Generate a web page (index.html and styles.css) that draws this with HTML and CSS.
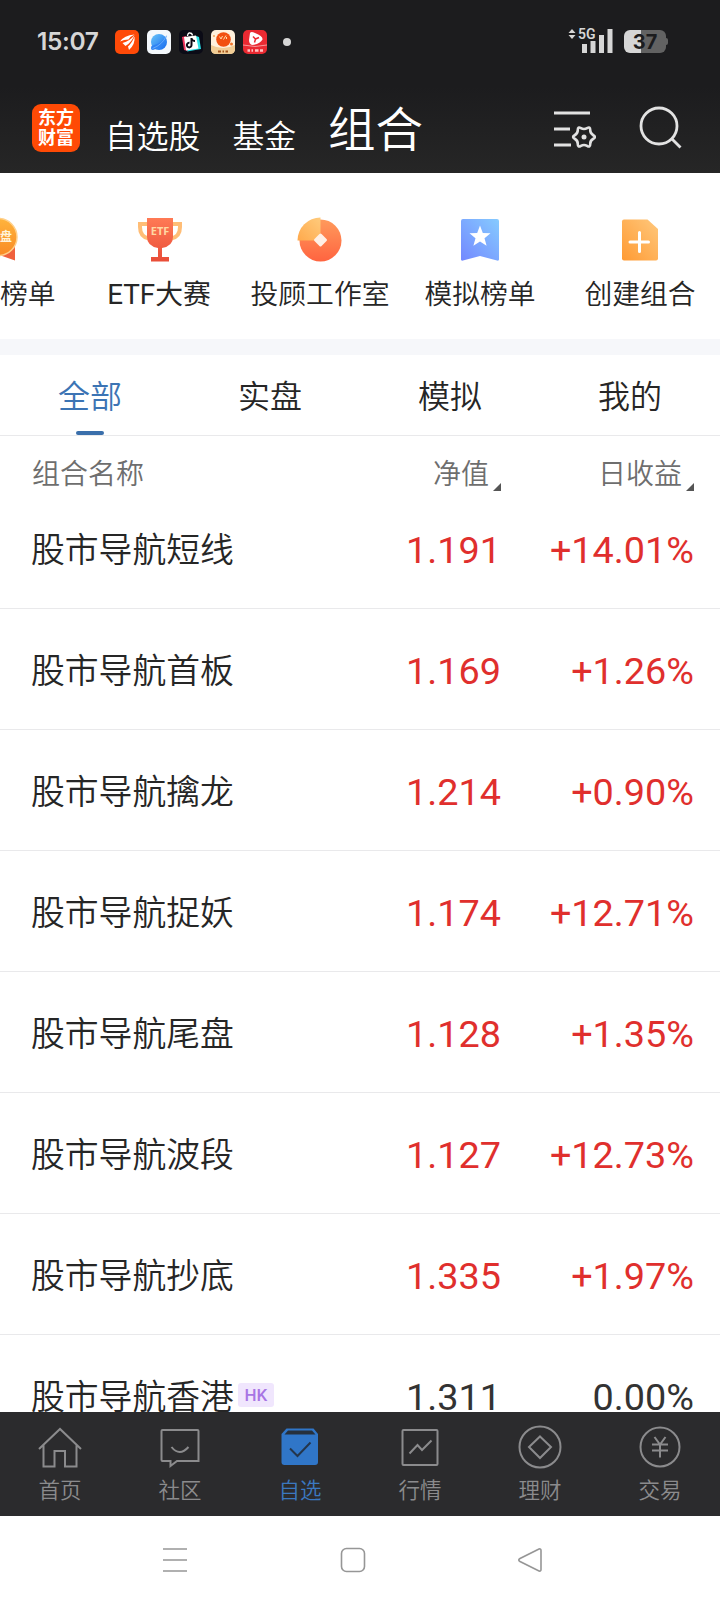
FILE: index.html
```html
<!DOCTYPE html>
<html lang="zh-CN">
<head>
    <meta charset="UTF-8">
    <meta name="viewport" content="width=device-width, initial-scale=1.0">
    <title>组合</title>
    <link rel="stylesheet" href="styles.css">
</head>
<body>
    <header class="top">
        <div class="status-bar">
            <span class="clock">15:07</span>
            <div class="apps">
                <svg width="24" height="24" viewBox="0 0 24 24">
                    <rect width="24" height="24" rx="5" fill="#ff4a08"/>
                    <path d="M5 11.500Q9 5.500 19.500 4.500Q16 6 13.500 9.500Q9 9.500 5 11.500ZM7.500 13Q15 11 19.500 5Q17 12 10.500 16ZM13 16.500Q17 13 19.500 6.500Q20.500 14 14 20Z" fill="#fff"/>
                </svg>
                <svg width="24" height="24" viewBox="0 0 24 24">
                    <defs>
                        <linearGradient id="globe" x1="0" y1="0" x2="1" y2="1">
                            <stop offset="0" stop-color="#69c5f8"/>
                            <stop offset="1" stop-color="#1468ef"/>
                        </linearGradient>
                    </defs>
                    <rect width="24" height="24" rx="5" fill="#f4f8fc"/>
                    <circle cx="12" cy="12" r="8" fill="url(#globe)"/>
                    <path d="M4.500 16Q3 20 6 20Q18 17 20 5Q16 13 4.500 16Z" fill="#2f83f4"/>
                    <path d="M5.500 18.500Q15 15 19.500 6" fill="none" stroke="#8cc8ff" stroke-width=".6"/>
                </svg>
                <svg width="24" height="24" viewBox="0 0 24 24">
                    <rect width="24" height="24" rx="5" fill="#0b0b16"/>
                    <path d="M3 7L5 20L9 21L7 6Z" fill="#f0325d"/>
                    <path d="M17 6L20 7L22 19L8 21.500Z" fill="#28dfe5"/>
                    <path d="M5 7L17 5.500L19.500 18.500L7 20.500Z" fill="#fff"/>
                    <path d="M8.500 6Q9 2.500 11 3Q13 3 13.500 5.500" fill="none" stroke="#fff" stroke-width="1.300"/>
                    <path d="M12.500 8V15.200A2.300 2.300 0 1 1 10.500 12.800M12.500 8.500Q13.500 11 16 11" fill="none" stroke="#0b0b16" stroke-width="2"/>
                </svg>
                <svg width="24" height="24" viewBox="0 0 24 24">
                    <rect width="24" height="24" rx="5" fill="#fff1dc"/>
                    <path d="M0 15Q12 21 24 15V19Q24 24 19 24H5Q0 24 0 19Z" fill="#f1cd95"/>
                    <circle cx="12.500" cy="9.500" r="7.300" fill="#f2500f"/>
                    <path d="M8.500 6.500L10 9L11.500 6M12.500 9.500L15 5.500M15.500 9V7" fill="none" stroke="#ffd9a8" stroke-width="1"/>
                    <circle cx="20.500" cy="14" r="1.500" fill="#f2762a"/>
                    <circle cx="3" cy="6" r="1" fill="#f2a65a"/>
                    <path d="M7 21.500H10M11.500 21.500H13M14.500 21.500H17" stroke="#a3541c" stroke-width="1.800"/>
                </svg>
                <svg width="24" height="24" viewBox="0 0 24 24">
                    <rect width="24" height="24" rx="5" fill="#ea2a32"/>
                    <path d="M0 15Q12 18 24 15" fill="none" stroke="#f7b5b5" stroke-width=".8"/>
                    <path d="M7 3Q8 1 12 3Q20 6 19.500 9.500Q17 14 9 15Q6 14 6 10Z" fill="#fff"/>
                    <path d="M10 6.500L12.500 9L16 7.500M12.500 9L11.500 12.500" fill="none" stroke="#ea2a32" stroke-width="1.500"/>
                    <path d="M4.500 20.500H7M8.500 20.500H10M12 20.500H15.500M17 20.500H20" stroke="#ffc5c5" stroke-width="2.400"/>
                </svg>
            </div>
            <span class="more-dot"></span>
            <svg class="signal" width="46" height="26" viewBox="0 0 46 26">
                <path d="M0.500 5L4 1L7.500 5ZM0.500 7H7.500L4 11Z" fill="#d6d6d6"/>
                <text x="10" y="11" class="net">5G</text>
                <path d="M14 16H19V25H14ZM22.500 13H27.500V25H22.500ZM31 7H36V25H31ZM39.500 1H44.500V25H39.500Z" fill="#d6d6d6"/>
            </svg>
            <div class="battery"><span>37</span></div>
        </div>
        <nav class="title-bar">
            <div class="logo">东方<br>财富</div>
            <a class="title">自选股</a>
            <a class="title">基金</a>
            <a class="title current">组合</a>
            <svg class="icon-manage" width="42" height="40" viewBox="0 0 42 40" fill="none" stroke="#e2e2e2">
                <path d="M0 4H36M0 20H16M0 36H17" stroke-width="3"/>
                <path transform="translate(30 28)" d="M9.300 1.750Q6.100 3.500 6.200 7.150Q6.250 10.800 3.100 8.900Q0 7 -3.100 8.900Q-6.250 10.800 -6.200 7.150Q-6.100 3.500 -9.300 1.750Q-12.500 0 -9.300 -1.750Q-6.100 -3.500 -6.200 -7.150Q-6.250 -10.800 -3.100 -8.900Q0 -7 3.100 -8.900Q6.250 -10.800 6.200 -7.150Q6.100 -3.500 9.300 -1.750Q12.500 0 9.300 1.750Z" stroke-width="2.600"/>
                <circle cx="30" cy="28" r="2.500" fill="#e2e2e2" stroke="none"/>
            </svg>
            <svg class="icon-search" width="44" height="44" viewBox="0 0 44 44" fill="none" stroke="#e2e2e2" stroke-width="2.800">
                <circle cx="20" cy="20" r="18"/>
                <path d="M32.500 32.500L41.500 41.500"/>
            </svg>
        </nav>
    </header>

    <section class="shortcuts">
        <div class="shortcut">
            <svg width="46" height="46" viewBox="0 0 46 46">
                <defs>
                    <linearGradient id="medal" x1="0" y1="0" x2="0" y2="1">
                        <stop offset="0" stop-color="#ffb43c"/>
                        <stop offset="1" stop-color="#f98a25"/>
                    </linearGradient>
                </defs>
                <path d="M6 30L5 43.500L22 38L38 43.500V28Z" fill="#f0613d"/>
                <circle cx="21.500" cy="20" r="18.500" fill="url(#medal)" stroke="#ffd08a" stroke-width="1.500"/>
                <text x="11" y="24" class="medal-text">实盘</text>
            </svg>
            <span>实盘榜单</span>
        </div>
        <div class="shortcut">
            <svg width="46" height="46" viewBox="0 0 46 46">
                <defs>
                    <linearGradient id="cup" x1="0" y1="0" x2="0" y2="1">
                        <stop offset="0" stop-color="#ff7a55"/>
                        <stop offset="1" stop-color="#e94d38"/>
                    </linearGradient>
                </defs>
                <path d="M11 7H3V10Q3 20 12 21.500M35 7H43V10Q43 20 34 21.500" fill="none" stroke="#ffbd76" stroke-width="4"/>
                <path d="M10 1H36V20Q36 29 25 31V40H32V44.500H14V40H21V31Q10 29 10 20Z" fill="url(#cup)"/>
                <text x="23" y="17.500" text-anchor="middle" class="etf-text">ETF</text>
            </svg>
            <span class="latin">ETF大赛</span>
        </div>
        <div class="shortcut">
            <svg width="46" height="46" viewBox="0 0 46 46">
                <defs>
                    <linearGradient id="coin" x1="0" y1="0" x2="0" y2="1">
                        <stop offset="0" stop-color="#ff9a5c"/>
                        <stop offset="1" stop-color="#ff6440"/>
                    </linearGradient>
                    <linearGradient id="slice" x1="0" y1="1" x2="1" y2="0">
                        <stop offset="0" stop-color="#ffa94c"/>
                        <stop offset="1" stop-color="#ffcb7c"/>
                    </linearGradient>
                </defs>
                <circle cx="23.500" cy="23.500" r="21" fill="url(#coin)"/>
                <path d="M23.500 0.500A23 23 0 0 0 .5 23.500H23.500Z" fill="url(#slice)"/>
                <rect x="18.500" y="18" width="10" height="10" rx="1.500" transform="rotate(45 23.500 23)" fill="#fff0e6"/>
            </svg>
            <span>投顾工作室</span>
        </div>
        <div class="shortcut">
            <svg width="46" height="46" viewBox="0 0 46 46">
                <defs>
                    <linearGradient id="flag" x1="0" y1="1" x2="1" y2="0">
                        <stop offset="0" stop-color="#7388ff"/>
                        <stop offset="1" stop-color="#86cbff"/>
                    </linearGradient>
                </defs>
                <path d="M6 2H40Q42 2 42 4V42.500Q42 44 40 43.500L23 39L6 43.500Q4 44 4 42.500V4Q4 2 6 2Z" fill="url(#flag)"/>
                <path d="M23 8.500L25.800 16L33.500 16.300L27.500 21.200L29.600 28.800L23 24.500L16.400 28.800L18.500 21.200L12.500 16.300L20.200 16Z" fill="#fff"/>
            </svg>
            <span>模拟榜单</span>
        </div>
        <div class="shortcut">
            <svg width="46" height="46" viewBox="0 0 46 46">
                <defs>
                    <linearGradient id="sheet" x1="0" y1="1" x2="1" y2="0">
                        <stop offset="0" stop-color="#ff9a33"/>
                        <stop offset="1" stop-color="#ffc87c"/>
                    </linearGradient>
                </defs>
                <path d="M7 2.500H30.500L41 12V41.500Q41 43.500 39 43.500H7Q5 43.500 5 41.500V4.500Q5 2.500 7 2.500Z" fill="url(#sheet)"/>
                <path d="M13 25H31.500M22.500 15.500V34.500" stroke="#fff" stroke-width="3" stroke-linecap="round"/>
            </svg>
            <span>创建组合</span>
        </div>
    </section>

    <nav class="tabs">
        <a class="tab active">全部</a>
        <a class="tab">实盘</a>
        <a class="tab">模拟</a>
        <a class="tab">我的</a>
    </nav>

    <main class="portfolios">
        <div class="list-head">
            <span class="name">组合名称</span>
            <span class="value">净值<i class="sort"></i></span>
            <span class="profit">日收益<i class="sort"></i></span>
        </div>
        <div class="row"><span class="name">股市导航短线</span><span class="value">1.191</span><span class="profit">+14.01%</span></div>
        <div class="row"><span class="name">股市导航首板</span><span class="value">1.169</span><span class="profit">+1.26%</span></div>
        <div class="row"><span class="name">股市导航擒龙</span><span class="value">1.214</span><span class="profit">+0.90%</span></div>
        <div class="row"><span class="name">股市导航捉妖</span><span class="value">1.174</span><span class="profit">+12.71%</span></div>
        <div class="row"><span class="name">股市导航尾盘</span><span class="value">1.128</span><span class="profit">+1.35%</span></div>
        <div class="row"><span class="name">股市导航波段</span><span class="value">1.127</span><span class="profit">+12.73%</span></div>
        <div class="row"><span class="name">股市导航抄底</span><span class="value">1.335</span><span class="profit">+1.97%</span></div>
        <div class="row flat"><span class="name">股市导航香港<em class="market">HK</em></span><span class="value">1.311</span><span class="profit">0.00%</span></div>
    </main>

    <nav class="bottom-nav">
        <a class="nav-item">
            <svg width="46" height="46" viewBox="0 0 46 46"><path d="M2 24L23 4L44 24M6.500 20V41.500H17.500V26H28V41.500H39.500V20"/></svg>
            <span>首页</span>
        </a>
        <a class="nav-item">
            <svg width="46" height="46" viewBox="0 0 46 46"><path d="M5.500 5H40.500Q41.500 5 41.500 6V36H20L13.500 41V36H5.500Q4.500 36 4.500 35V6Q4.500 5 5.500 5ZM14.500 22Q22.500 32 31.500 22"/></svg>
            <span>社区</span>
        </a>
        <a class="nav-item active">
            <svg width="46" height="46" viewBox="0 0 46 46">
                <path d="M4.500 9L9.500 3.500H36.500L41 9V37Q41 40 38 40H7.500Q4.500 40 4.500 37Z" fill="#3076c8" stroke="none"/>
                <path d="M7.500 9.500L11 5.500H35L38.500 9.500Z" fill="#26303c" stroke="none"/>
                <path d="M13 23.500L20.500 31L33.500 17.500" stroke="#24364c"/>
            </svg>
            <span>自选</span>
        </a>
        <a class="nav-item">
            <svg width="46" height="46" viewBox="0 0 46 46"><rect x="5.500" y="5" width="35" height="35" rx="1"/><path d="M12.500 28.500L20.500 20L25 25L34.500 15.500"/></svg>
            <span>行情</span>
        </a>
        <a class="nav-item">
            <svg width="46" height="46" viewBox="0 0 46 46"><circle cx="23" cy="22" r="20.500"/><path d="M23 11.500L34 22L23 33L12 22Z"/></svg>
            <span>理财</span>
        </a>
        <a class="nav-item">
            <svg width="46" height="46" viewBox="0 0 46 46"><circle cx="23" cy="22" r="19.500"/><path d="M17.500 12L23 19.500L28.500 12M15 19.500H31M15 25.500H31M23 19.500V32.500"/></svg>
            <span>交易</span>
        </a>
    </nav>

    <footer class="system-nav">
        <svg width="26" height="26" viewBox="0 0 26 26"><path d="M0 2H24M0 13H24M0 24H24"/></svg>
        <svg width="26" height="26" viewBox="0 0 26 26"><rect x="1.500" y="1.500" width="23" height="23" rx="5"/></svg>
        <svg width="26" height="26" viewBox="0 0 26 26"><path d="M22 2L3 11.500Q0.500 13 3 14.500L22 24Q24 24.500 24 22.500V3.500Q24 1.500 22 2Z"/></svg>
    </footer>
</body>
</html>
```
FILE: styles.css
```css
* {
    box-sizing: border-box;
}
body {
    margin: 0;
    width: 720px;
    height: 1604px;
    overflow: hidden;
    display: flex;
    flex-direction: column;
    background-color: #fff;
    color: #262626;
    font-family: "Roboto", "Noto Sans CJK SC", sans-serif;
    font-weight: 350;
}

/* header */
.top {
    height: 173px;
    flex: none;
    background: linear-gradient(#1c1c1e 50%, #262626);
    color: #fff;
}
.status-bar {
    height: 83px;
    padding: 0 54px 0 37px;
    display: flex;
    align-items: center;
}
.clock {
    width: 78px;
    font-family: Inter, sans-serif;
    font-size: 24.5px;
    font-weight: 600;
    letter-spacing: -0.4px;
    line-height: 28px;
    padding-bottom: 2px;
    color: #d6d6d6;
}
.apps {
    display: flex;
    gap: 8px;
}
.more-dot {
    width: 8px;
    height: 8px;
    margin-left: 16px;
    border-radius: 50%;
    background-color: #d6d6d6;
}
.signal {
    margin-left: auto;
    margin-right: 10px;
    margin-bottom: 2px;
    overflow: visible;
}
.net {
    font-family: "Roboto", sans-serif;
    font-size: 14px;
    font-weight: 600;
    fill: #d6d6d6;
}
.battery {
    position: relative;
    width: 42px;
    height: 23px;
    border-radius: 6px;
    background: linear-gradient(90deg, #d6d6d6 40%, #626262 40%);
    color: #1c1c1e;
    font-family: Inter, sans-serif;
    font-size: 20px;
    font-weight: 700;
    line-height: 24px;
    text-align: center;
}
.battery::after {
    content: "";
    position: absolute;
    right: -2px;
    top: 8px;
    width: 2px;
    height: 7px;
    border-radius: 0 2px 2px 0;
    background-color: #626262;
}
.title-bar {
    height: 90px;
    padding: 0 37px 0 32px;
    display: flex;
    align-items: center;
}
.logo {
    width: 48px;
    height: 48px;
    margin-right: 25px;
    padding-top: 4px;
    border-radius: 9px;
    background-color: #ff4a05;
    font-size: 18px;
    font-weight: 700;
    line-height: 20px;
    text-align: center;
}
.title {
    margin-top: 17px;
    margin-right: 32px;
    font-size: 31.8px;
    line-height: 46px;
}
.title.current {
    margin-top: 5px;
    margin-right: 0;
    margin-left: 0;
    font-size: 47.5px;
}
.icon-manage {
    margin-left: auto;
    margin-right: 43px;
    margin-top: 1px;
}

/* shortcuts */
.shortcuts {
    height: 182px;
    flex: none;
    padding-top: 44px;
    display: flex;
    margin-left: -80px;
    border-bottom: 16px solid #f6f7fa;
}
.shortcut {
    width: 160px;
    flex: none;
    display: flex;
    flex-direction: column;
    align-items: center;
    font-size: 27.8px;
    line-height: 40px;
    white-space: nowrap;
}
.shortcut span {
    margin-top: 12px;
}
.shortcut .latin {
    margin-left: -2px;
    font-weight: 380;
}
.medal-text {
    font-size: 12px;
    font-weight: 700;
    fill: #fff3dc;
}
.etf-text {
    font-family: "Noto Sans", sans-serif;
    font-size: 11px;
    font-weight: 700;
    fill: #ffd8a3;
}

/* tabs */
.tabs {
    height: 81px;
    flex: none;
    display: flex;
    border-bottom: 1px solid #e9e9eb;
}
.tab {
    flex: 1;
    position: relative;
    font-size: 32px;
    line-height: 84px;
    text-align: center;
}
.tab.active {
    color: #3c74b4;
}
.tab.active::after {
    content: "";
    position: absolute;
    left: 76px;
    bottom: 0;
    width: 28px;
    height: 4px;
    border-radius: 2px;
    background-color: #3a6fab;
}

/* portfolio list */
.portfolios {
    flex: 1;
    min-height: 0;
    overflow: hidden;
}
.list-head,
.row {
    display: flex;
    padding: 0 26px 0 31px;
}
.list-head {
    height: 52px;
    padding-left: 32px;
    color: #6e6e6e;
    font-size: 28px;
    line-height: 78px;
}
.name {
    flex: 1;
}
.value {
    width: 140px;
    text-align: right;
}
.profit {
    width: 193px;
    text-align: right;
}
.sort {
    display: inline-block;
    margin-left: 4px;
    border-left: 8px solid transparent;
    border-bottom: 8px solid #555;
    vertical-align: -7px;
}
.row {
    height: 121px;
    border-bottom: 1px solid #e9e9eb;
    line-height: 124px;
    font-size: 33.8px;
}
.row .name {
    line-height: 126px;
}
.row .value,
.row .profit {
    color: #e02f2d;
    font-size: 37.8px;
    font-weight: 400;
}
.row.flat .value,
.row.flat .profit {
    color: #333;
}
.market {
    display: inline-block;
    margin-left: 4px;
    width: 36px;
    height: 24px;
    border-radius: 3px;
    background-color: #f0e6fd;
    color: #a875e4;
    font-size: 17px;
    font-style: normal;
    font-weight: 500;
    line-height: 25px;
    text-align: center;
    vertical-align: 8px;
}

/* app navigation */
.bottom-nav {
    height: 104px;
    flex: none;
    display: flex;
    background-color: #2b2b2d;
}
.nav-item {
    width: 120px;
    padding-top: 13px;
    display: flex;
    flex-direction: column;
    align-items: center;
    color: #8b8b8d;
    font-size: 21.5px;
    line-height: 30px;
}
.nav-item svg {
    fill: none;
    stroke: #8b8b8d;
    stroke-width: 2;
}
.nav-item span {
    margin-top: 5px;
}
.nav-item.active {
    color: #3b78c0;
}

.system-nav {
    height: 88px;
    flex: none;
    display: flex;
    justify-content: center;
    align-items: center;
    gap: 151px;
    padding-right: 14px;
}
.system-nav svg {
    fill: none;
    stroke: #969696;
    stroke-width: 1.6;
}
```
